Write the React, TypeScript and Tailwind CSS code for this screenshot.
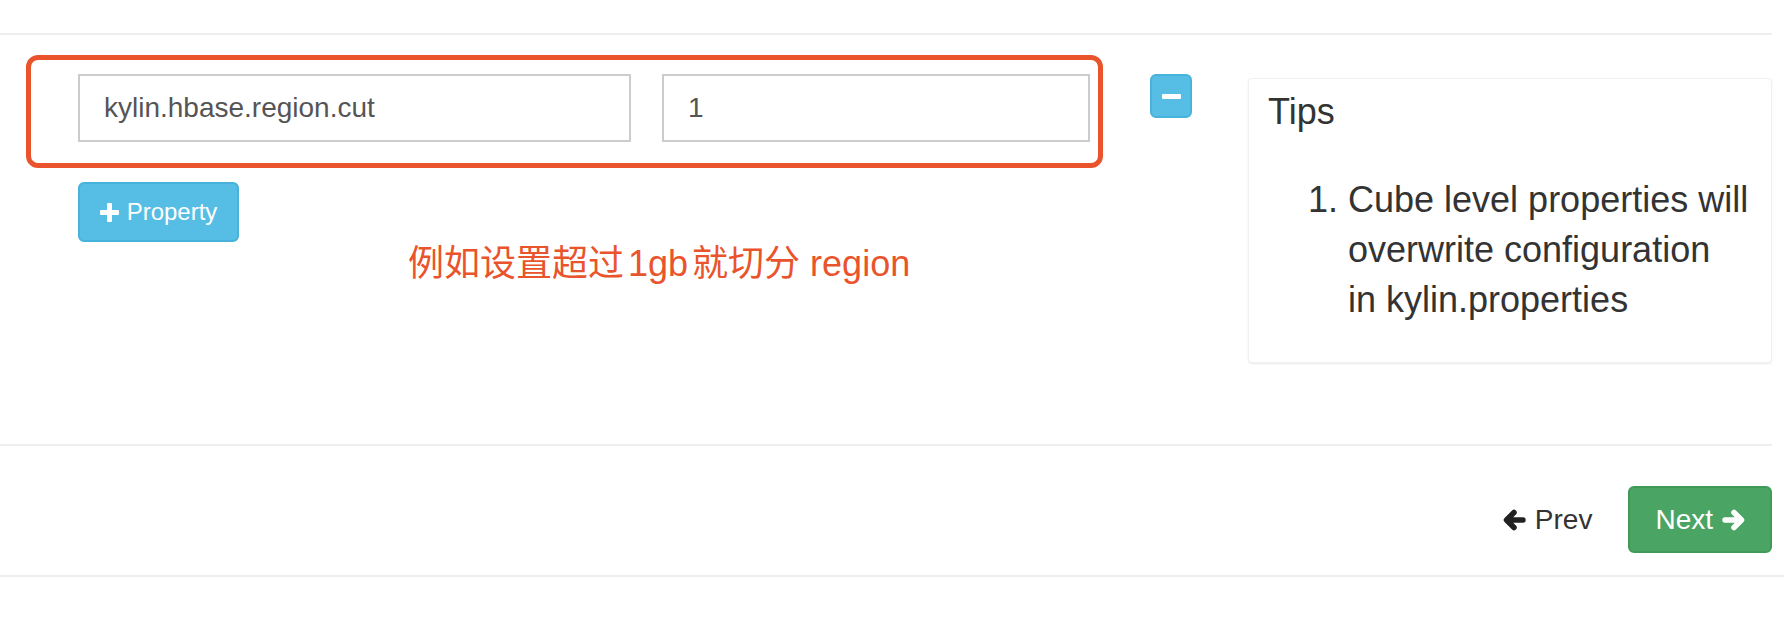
import React from "react";

function Arrow({ dir, color }: { dir: "left" | "right"; color: string }) {
  return (
    <svg
      width="23"
      height="22"
      viewBox="0 0 23 22"
      className={dir === "left" ? "-scale-x-100" : ""}
    >
      <path
        d="M3 11 H19 M12 3.5 L19.5 11 L12 18.5"
        fill="none"
        stroke={color}
        strokeWidth="5.5"
        strokeLinecap="round"
        strokeLinejoin="round"
      />
    </svg>
  );
}

function PlusIcon() {
  return (
    <svg width="19" height="19" viewBox="0 0 19 19">
      <rect x="7" y="0" width="5" height="19" rx="1" fill="#fff" />
      <rect x="0" y="7" width="19" height="5" rx="1" fill="#fff" />
    </svg>
  );
}

export default function App() {
  return (
    <div className="w-[1784px] h-[620px] bg-white overflow-hidden font-['Liberation_Sans','Noto_Sans_CJK_SC',sans-serif]">
      {/* form body */}
      <div className="mt-[33px] mr-[12px] h-[413px] border-t-2 border-b-2 border-[#eeeeee] flex items-start pl-[26px]">
        <div className="flex flex-col">
          <div className="w-[1077px] h-[113px] mt-[20px] border-[5px] border-[#e9542c] rounded-[12px] flex gap-[31px] pl-[47px] pt-[14px]">
            <div className="w-[553px] h-[68px] border-2 border-[#cccccc] flex items-center pl-[24px] text-[28px] text-[#555555]">
              kylin.hbase.region.cut
            </div>
            <div className="w-[428px] h-[68px] border-2 border-[#cccccc] flex items-center pl-[24px] text-[28px] text-[#555555]">
              1
            </div>
          </div>
          <button className="ml-[52px] mt-[14px] w-[161px] h-[60px] rounded-[6px] bg-[#56bee4] border-2 border-[#47b3da] flex items-center justify-center gap-[8px] text-white text-[24px]">
            <PlusIcon />
            <span>Property</span>
          </button>
          <div className="ml-[382px] text-[36px] leading-[44px] text-[#e9542c] whitespace-nowrap">
            例如设置超过<span className="mx-[4px]">1gb</span>就切分 region
          </div>
        </div>

        <button className="ml-[47px] mt-[39px] w-[42px] h-[44px] rounded-[6px] bg-[#56bee4] border-2 border-[#47b3da] flex items-center justify-center">
          <span className="block w-[19px] h-[5px] bg-white rounded-[1px]" />
        </button>

        <div className="ml-[56px] mt-[43px] w-[524px] h-[285px] bg-white border border-[#f1f1f1] rounded-[4px] shadow-[0_1px_2px_rgba(0,0,0,0.08)] pl-[19px] pt-[13px] text-[#333333]">
          <h4 className="text-[36px] leading-[40px]">Tips</h4>
          <ol className="list-decimal pl-[80px] mt-[43px] text-[36px] leading-[50px]">
            <li className="whitespace-nowrap">
              Cube level properties will
              <br />
              overwrite configuration
              <br />
              in kylin.properties
            </li>
          </ol>
        </div>
      </div>

      {/* footer */}
      <div className="h-[131px] border-b-2 border-[#eeeeee]">
        <div className="flex justify-end items-center pt-[40px] pr-[12px]">
          <div className="flex items-center gap-[9px] mr-[36px] text-[28px] text-[#333333]">
            <Arrow dir="left" color="#222222" />
            <span>Prev</span>
          </div>
          <button className="h-[67px] rounded-[6px] bg-[#4aa463] border-2 border-[#3f9a58] flex items-center gap-[9px] px-[25px] text-white text-[28px]">
            <span>Next</span>
            <Arrow dir="right" color="#ffffff" />
          </button>
        </div>
      </div>
    </div>
  );
}
